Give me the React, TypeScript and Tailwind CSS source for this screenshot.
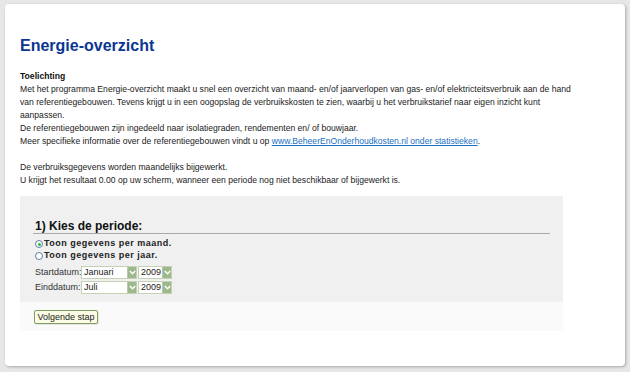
import { useState } from "react";

const FONT = { fontFamily: '"Liberation Sans", Arial, Helvetica, sans-serif' };

function Chevron() {
  return (
    <svg width="7" height="5" viewBox="0 0 7 5" aria-hidden>
      <path d="M0.8 1 L3.5 3.8 L6.2 1" fill="none" stroke="#ffffff" strokeWidth="1.4" />
    </svg>
  );
}

interface SelectBoxProps {
  value: string;
  width: string;
}

function SelectBox({ value, width }: SelectBoxProps) {
  return (
    <div
      className={`${width} h-[13px] flex items-stretch border border-[#c3d2b4] bg-white`}
    >
      <span className="flex-1 pl-[2px] text-[9px] leading-[11px] text-[#222] whitespace-nowrap">
        {value}
      </span>
      <span className="w-[9px] bg-[#9fb88b] flex items-center justify-center border-l border-[#b7c9a6]">
        <Chevron />
      </span>
    </div>
  );
}

function Radio({ checked }: { checked: boolean }) {
  return (
    <span className="w-[8px] h-[8px] rounded-full border border-[#5a7fa8] bg-white flex items-center justify-center shrink-0">
      {checked && <span className="w-[3px] h-[3px] rounded-full bg-[#1fbf35]" />}
    </span>
  );
}

export default function App() {
  const [perMaand, setPerMaand] = useState(true);

  return (
    <div className="w-[630px] h-[372px] bg-[#e7e7e7] pt-[4px] pl-[5px]" style={FONT}>
      <div className="w-[620px] h-[362px] bg-white rounded-[4px] shadow-[1px_1px_3px_rgba(0,0,0,0.28)] pt-[32px] pl-[15px]">
        {/* Titel */}
        <h1 className="text-[16px] leading-[19px] font-bold text-[#0b3692]">
          Energie-overzicht
        </h1>

        {/* Toelichting */}
        <div className="mt-[15px] text-[8.6px] leading-[13px] text-[#222] whitespace-nowrap">
          <p className="font-bold text-[#111]">Toelichting</p>
          <p>
            Met het programma Energie-overzicht maakt u snel een overzicht van maand- en/of jaarverlopen van gas- en/of elektricteitsverbruik aan de hand
            <br />
            van referentiegebouwen. Tevens krijgt u in een oogopslag de verbruikskosten te zien, waarbij u het verbruikstarief naar eigen inzicht kunt
            <br />
            aanpassen.
            <br />
            De referentiegebouwen zijn ingedeeld naar isolatiegraden, rendementen en/ of bouwjaar.
            <br />
            Meer specifieke informatie over de referentiegebouwen vindt u op{" "}
            <a href="#" className="text-[#1a6fc2] underline">
              www.BeheerEnOnderhoudkosten.nl onder statistieken
            </a>
            .
          </p>
          <p className="mt-[13px]">
            De verbruiksgegevens worden maandelijks bijgewerkt.
            <br />
            U krijgt het resultaat 0.00 op uw scherm, wanneer een periode nog niet beschikbaar of bijgewerkt is.
          </p>
        </div>

        {/* Periode kiezen */}
        <div className="mt-[9px] w-[543px]">
          <div className="bg-[#f0f0f0] px-[13px] pt-[23px] pb-[8px]">
            <h2 className="text-[12px] leading-[14px] font-bold text-[#111] border-b border-[#a9a9a9] pl-[2px]">
              1) Kies de periode:
            </h2>
            <div className="mt-[4px] pl-[2px] text-[9px] text-[#222]">
              <label
                className="flex items-center h-[12px] font-bold tracking-[0.5px] cursor-pointer"
                onClick={() => setPerMaand(true)}
              >
                <Radio checked={perMaand} />
                <span className="ml-[1px]">Toon gegevens per maand.</span>
              </label>
              <label
                className="flex items-center h-[12px] font-bold tracking-[0.5px] cursor-pointer"
                onClick={() => setPerMaand(false)}
              >
                <Radio checked={!perMaand} />
                <span className="ml-[1px]">Toon gegevens per jaar.</span>
              </label>
              <div className="mt-[4px] flex flex-col gap-[1px]">
                <div className="flex items-center">
                  <span className="w-[46px] text-[#333]">Startdatum:</span>
                  <SelectBox value="Januari" width="w-[56px]" />
                  <span className="w-[1px]" />
                  <SelectBox value="2009" width="w-[34px]" />
                </div>
                <div className="flex items-center">
                  <span className="w-[46px] text-[#333]">Einddatum:</span>
                  <SelectBox value="Juli" width="w-[56px]" />
                  <span className="w-[1px]" />
                  <SelectBox value="2009" width="w-[34px]" />
                </div>
              </div>
            </div>
          </div>
          <div className="bg-[#fafafa] px-[14px] pt-[8px] pb-[7px] flex">
            <button className="h-[14px] w-[64px] border border-[#7f9d60] bg-[#fcfce6] rounded-[2px] text-[9px] leading-[12px] text-[#222] shadow-[1px_1px_0_rgba(0,0,0,0.08)]">
              Volgende stap
            </button>
          </div>
        </div>
      </div>
    </div>
  );
}
